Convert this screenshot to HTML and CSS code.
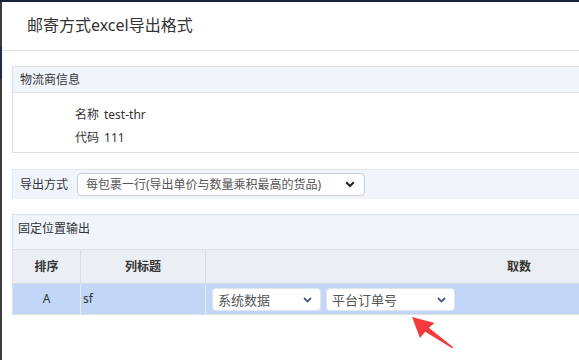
FILE: index.html
```html
<!DOCTYPE html>
<html lang="zh-CN">
<head>
<meta charset="utf-8">
<title>邮寄方式excel导出格式</title>
<link rel="stylesheet" href="styles.css">
</head>
<body>
<div class="modal">
  <div class="modal-header">
    <h4 class="modal-title">邮寄方式excel导出格式</h4>
  </div>
  <div class="modal-body">
    <div class="panel">
      <div class="panel-heading">物流商信息</div>
      <div class="panel-body info">
        <div class="info-row"><span>名称</span><span>test-thr</span></div>
        <div class="info-row"><span>代码</span><span>111</span></div>
      </div>
    </div>

    <div class="export-row">
      <span class="export-label">导出方式</span>
      <div class="select select-export">
        <span class="select-text">每包裹一行(导出单价与数量乘积最高的货品)</span>
        <svg class="chev chev-bold" width="10" height="7" viewBox="0 0 10 7"><path d="M1.2 1.2 L5 5 L8.8 1.2" fill="none" stroke="#222" stroke-width="2"/></svg>
      </div>
    </div>

    <div class="panel panel-fixed">
      <div class="panel-heading tall">固定位置输出</div>
      <div class="table">
        <div class="tr thead">
          <div class="td c1">排序</div>
          <div class="td c2">列标题</div>
          <div class="td c3">取数</div>
        </div>
        <div class="tr trow">
          <div class="td c1">A</div>
          <div class="td c2 left">sf</div>
          <div class="td c3 left cells">
            <div class="select select-sys">
              <span class="select-text">系统数据</span>
              <svg class="chev" width="9" height="6" viewBox="0 0 9 6"><path d="M1 1 L4.5 4.5 L8 1" fill="none" stroke="#4a5c7d" stroke-width="1.8"/></svg>
            </div>
            <div class="select select-field">
              <span class="select-text">平台订单号</span>
              <svg class="chev" width="9" height="6" viewBox="0 0 9 6"><path d="M1 1 L4.5 4.5 L8 1" fill="none" stroke="#4a5c7d" stroke-width="1.8"/></svg>
            </div>
          </div>
        </div>
      </div>
    </div>
  </div>
  <svg class="arrow" width="60" height="50" viewBox="0 0 60 50">
    <path d="M2 0 L24.5 6 L18.8 10.8 L43 30 L42.2 31.2 L15.2 14.8 L10 21 Z" fill="#f43a3a"/>
  </svg>
</div>
</body>
</html>
```

FILE: styles.css
```css
* { box-sizing: border-box; }

html, body {
  margin: 0;
  height: 100%;
  overflow: hidden;
}

body {
  padding: 2px 0 0 2px;
  background:
    linear-gradient(#17223b, #17223b) top left / 100% 2px no-repeat,
    linear-gradient(to bottom, #3d3d3d 0 47px, #1d2b4f 47px 79px, #3d3d3d 79px);
  font-family: "Noto Sans", "Noto Sans CJK SC", sans-serif;
  font-size: 12px;
  color: #333;
}

.modal {
  position: relative;
  width: 831px;
  height: 358px;
  background: #fff;
  overflow: hidden;
}

.modal-header {
  height: 49px;
  border-bottom: 1px solid #e5e5e5;
  display: flex;
  align-items: center;
  padding: 0 0 2px 25px;
}

.modal-title {
  margin: 0;
  font-size: 16px;
  font-weight: normal;
  color: #333;
  line-height: 20px;
}

.modal-body {
  padding: 15px 0 0 10px;
}

.panel {
  border: 1px solid #dde1e6;
  background: #fff;
}

.panel-heading {
  height: 26px;
  background: #f0f5fc;
  border-bottom: 1px solid #dde1e6;
  padding: 0 7px;
  display: flex;
  align-items: center;
  line-height: 16px;
  color: #333;
}

.panel-heading.tall {
  height: 35px;
  align-items: flex-start;
  padding: 6px 5px 0;
}

.info {
  padding: 10px 0 3px 62px;
}

.info-row {
  height: 23px;
  display: flex;
  align-items: center;
  gap: 5px;
  line-height: 16px;
}

.export-row {
  margin-top: 16px;
  height: 30px;
  background: #f0f5fc;
  border-top: 1px solid #e3e8ef;
  border-left: 1px solid #e3e8ef;
  display: flex;
  align-items: center;
  padding: 0 0 0 7px;
  gap: 9px;
}

.export-label {
  color: #333;
  line-height: 16px;
}

.select {
  height: 23px;
  background: #fff;
  border: 1px solid #ccc;
  border-radius: 4px;
  display: flex;
  align-items: center;
  justify-content: space-between;
  color: #555;
  line-height: 16px;
}

.select-export {
  width: 288px;
  padding: 0 9px 0 8px;
}

.select-export .select-text { font-size: 12px; }

.panel-fixed {
  margin-top: 15px;
}

.table {
  display: flex;
  flex-direction: column;
}

.tr {
  display: flex;
}

.td {
  display: flex;
  align-items: center;
  justify-content: center;
  border-right: 1px solid #d9dee5;
  line-height: 16px;
}

.c1 { width: 68px; }
.c2 { width: 125px; }
.c3 { flex: 1; border-right: none; }

.thead {
  height: 33px;
  background: #ebeef2;
  font-weight: bold;
  color: #333;
}

.thead .td { border-right-color: #d7dce2; }

.trow {
  height: 31px;
  background: #c2d7f7;
  border-top: 1px solid #d7dde5;
  color: #333;
}

.trow .td { border-right-color: #e2e9f3; }

.left { justify-content: flex-start; }
.c2.left { padding-left: 2px; }

.cells {
  padding-left: 6px;
  gap: 5px;
  padding-top: 1px;
}

.select-sys,
.select-field {
  font-size: 13px;
  padding: 0 8px 0 5px;
  border-color: #e0e6ee;
}

.select-sys { width: 109px; }
.select-field { width: 129px; }

.chev { display: block; flex: none; }

.arrow {
  position: absolute;
  left: 408px;
  top: 315px;
}
```
